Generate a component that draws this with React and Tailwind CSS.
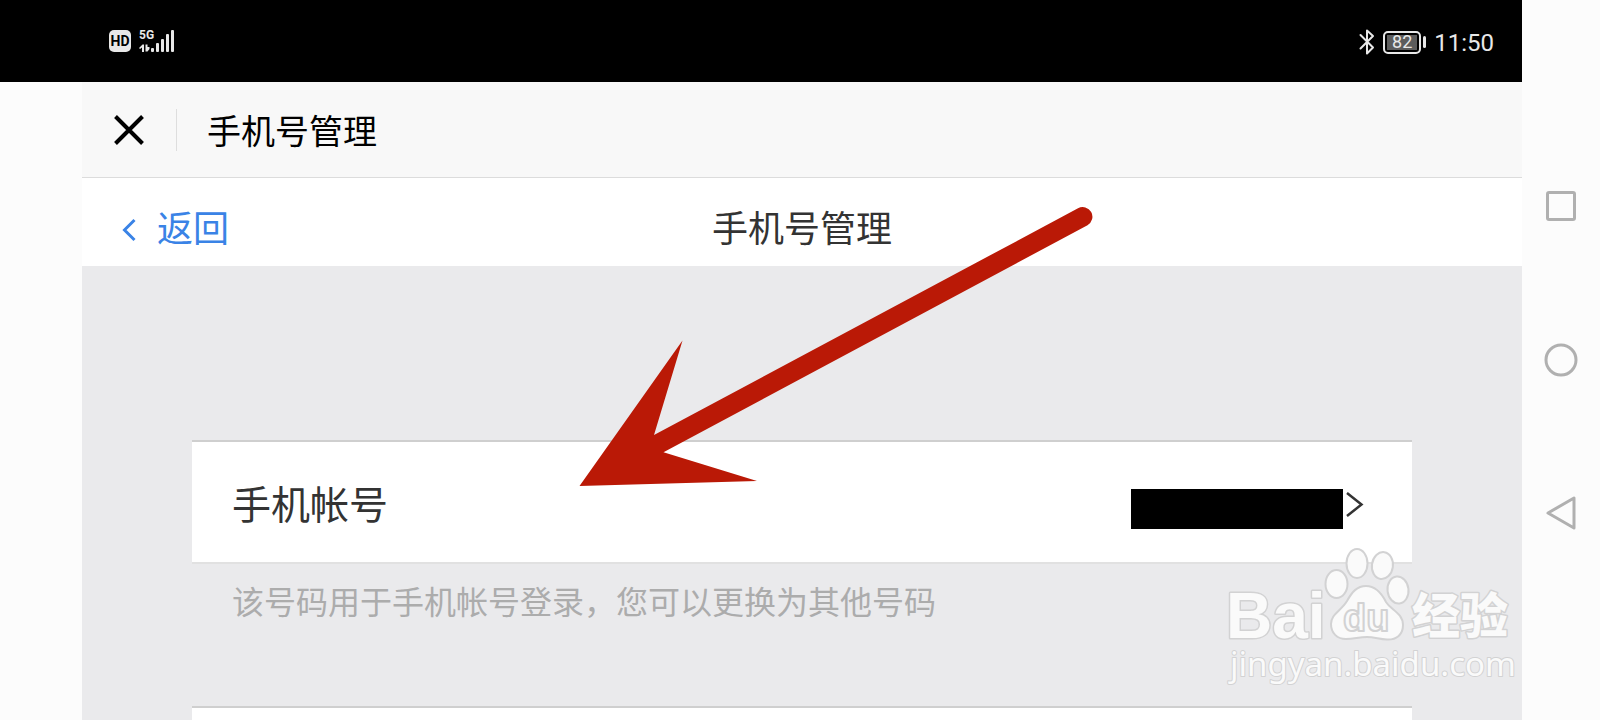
const SIGNAL_BARS = [
  { x: 12, height: 4 },
  { x: 17, height: 9 },
  { x: 22, height: 13 },
  { x: 27, height: 18 },
  { x: 32, height: 22 },
];

function SignalIcon() {
  return (
    <svg className="-mt-1" width="36" height="26" viewBox="0 -4 36 26" fill="#e8e8e8" aria-label="5G">
      <text x="0" y="9" className="font-['Roboto',sans-serif] text-[12px] font-bold">5G</text>
      {/* flechas de subida y bajada */}
      <path d="M0 18 L3.5 14.5 H5 V22 H3 V17.5 L1 19 Z M6.5 14.5 H8.5 V17 L10.5 17 L10.5 19 L8.5 21.5 H6.5 Z" />
      {SIGNAL_BARS.map((bar) => (
        <rect key={bar.x} x={bar.x} y={22 - bar.height} width="3" height={bar.height} rx="1" />
      ))}
    </svg>
  );
}

function BluetoothIcon() {
  return (
    <svg width="16" height="26" viewBox="0 0 16 26" fill="none" stroke="#e8e8e8" strokeWidth="2" strokeLinejoin="round" strokeLinecap="round">
      <path d="M1.5 6 L14 18.5 L8 24.5 V1.5 L14 7 L1.5 19.5" />
    </svg>
  );
}

function StatusBar() {
  return (
    <header className="flex h-[82px] items-center justify-between bg-black pr-7 pl-[109px] text-[#e8e8e8]">
      <div className="flex items-center gap-2">
        <span className="flex h-[22px] w-[22px] items-center justify-center rounded-[5px] bg-[#e8e8e8] font-['Roboto',sans-serif] text-[14px] font-bold text-black">
          HD
        </span>
        <SignalIcon />
      </div>
      <div className="flex items-center pt-0.5 font-['Roboto',sans-serif]">
        <BluetoothIcon />
        <span className="ml-2 flex h-[23px] w-[38px] items-center justify-center rounded-[5px] border-2 border-[#e8e8e8] p-[2px]">
          <span className="flex h-full w-full items-center justify-center bg-[#5c5c5c] text-[18px] leading-none">82</span>
        </span>
        <span className="ml-[2px] h-3 w-[3px] rounded-sm bg-[#e8e8e8]" />
        <time className="ml-2 pt-0.5 text-[24px] leading-8">11:50</time>
      </div>
    </header>
  );
}

function TitleBar() {
  return (
    <div className="flex h-24 items-center border-b border-[#dcdcdc] bg-[#f8f8f8] pl-8 text-black">
      <button type="button" aria-label="关闭">
        <svg width="30" height="30" viewBox="0 0 30 30" fill="none" stroke="currentColor" strokeWidth="4">
          <path d="M1.5 1.5 L28.5 28.5 M28.5 1.5 L1.5 28.5" />
        </svg>
      </button>
      <span className="ml-8 h-[42px] w-px bg-[#dedede]" />
      <h1 className="ml-[30px] text-[34px] leading-10">手机号管理</h1>
    </div>
  );
}

function NavBar() {
  return (
    <div className="grid h-[88px] grid-cols-[1fr_auto_1fr] items-center bg-white pt-2">
      <button type="button" className="flex items-center gap-5 justify-self-start pl-10 text-[#3a83e6]">
        <svg className="mt-2" width="15" height="24" viewBox="0 0 15 24" fill="none" stroke="currentColor" strokeWidth="3">
          <path d="M12.5 2 L2.5 12 L12.5 22" />
        </svg>
        <span className="text-[36px] leading-10">返回</span>
      </button>
      <h2 className="text-[36px] leading-10 text-[#333]">手机号管理</h2>
    </div>
  );
}

function PointerArrow() {
  return (
    <svg className="pointer-events-none absolute top-[200px] left-[570px]" width="540" height="300" viewBox="570 200 540 300" fill="#ba1906" aria-hidden="true">
      <path d="M579.5 486 L682.5 340.5 L654 435 L1078 208.3 A9.6 9.6 0 0 1 1087.5 225.2 L663.5 452.3 L757 481 Z" />
    </svg>
  );
}

function Watermark() {
  return (
    <svg
      className="pointer-events-none absolute right-1 bottom-[30px]"
      width="294"
      height="145"
      viewBox="1224 545 294 145"
      fill="#fafafa"
      stroke="#d2d2d3"
      strokeWidth="2"
      strokeLinejoin="round"
      aria-hidden="true"
    >
      <ellipse cx="1336.5" cy="584" rx="11" ry="14" />
      <ellipse cx="1357" cy="563.5" rx="10.5" ry="14.5" />
      <ellipse cx="1382.5" cy="565.5" rx="10.5" ry="13.5" transform="rotate(8 1382 565)" />
      <ellipse cx="1398" cy="590" rx="10.5" ry="13.5" transform="rotate(-6 1398 590)" />
      <path d="M1366 586 C1375 586 1381 592 1386 602 C1391 610 1403 613 1403 625 C1403 635 1396 640 1387 639.5 C1379 639 1374 637 1367 637 C1359 637 1354 639 1346 639 C1337 639 1331 633 1331 624 C1331 614 1341 611 1347 601 C1352 592 1357 586 1366 586 Z" />
      <g className="[paint-order:stroke]">
        <text x="1226" y="638" strokeWidth="3" className="font-['Liberation_Sans',Arial,sans-serif] text-[64px] font-bold">Bai</text>
        <text x="1412" y="633" strokeWidth="3" className="font-['Noto_Sans_CJK_SC',sans-serif] text-[48px] font-black">经验</text>
        <text x="1230" y="676" strokeWidth="2" className="font-['Noto_Sans',sans-serif] text-[33px]">jingyan.baidu.com</text>
      </g>
      <text x="1343" y="631" className="font-['Liberation_Sans',Arial,sans-serif] text-[38px] font-bold">du</text>
    </svg>
  );
}

function SystemNav() {
  return (
    <nav className="flex w-[78px] flex-col items-center justify-between bg-[#fcfcfc] py-[188px] text-[#b0b0b0]">
      <button type="button" aria-label="最近任务">
        <svg width="36" height="36" viewBox="0 0 36 36" fill="none" stroke="currentColor" strokeWidth="3">
          <rect x="4.5" y="4.5" width="27" height="27" rx="1.5" />
        </svg>
      </button>
      <button type="button" aria-label="主屏幕">
        <svg width="36" height="36" viewBox="0 0 36 36" fill="none" stroke="currentColor" strokeWidth="3">
          <circle cx="18" cy="18" r="15" />
        </svg>
      </button>
      <button type="button" aria-label="返回上一页">
        <svg width="36" height="36" viewBox="0 0 36 36" fill="none" stroke="currentColor" strokeWidth="3" strokeLinejoin="round">
          <path d="M31 2 V32 L5 17 Z" />
        </svg>
      </button>
    </nav>
  );
}

function App() {
  return (
    <div className="flex min-h-screen bg-[#fcfcfc] font-['Noto_Sans_CJK_SC',sans-serif]">
      <div className="relative flex flex-1 flex-col">
        <StatusBar />
        <main className="ml-[82px] flex flex-1 flex-col bg-[#eaeaec]">
          <TitleBar />
          <NavBar />
          <div className="flex flex-1 flex-col px-[110px] pt-[174px]">
            <button type="button" className="flex h-[124px] items-center border-t-2 border-b-2 border-t-[#cfcfcf] border-b-[#e1e1e1] bg-white pr-12 pl-10 text-left text-[#333]">
              <span className="flex-1 text-[39px] leading-[48px]">手机帐号</span>
              {/* número oculto */}
              <span className="mt-[14px] h-10 w-[212px] bg-black" />
              <svg className="mt-1 ml-[3px]" width="18" height="26" viewBox="0 0 18 26" fill="none" stroke="currentColor" strokeWidth="2.5">
                <path d="M1 2 L15.5 13.5 L1 25" />
              </svg>
            </button>
            <p className="px-10 pt-3 text-[32px] leading-[48px] text-[#acacac]">
              该号码用于手机帐号登录，您可以更换为其他号码
            </p>
            <div className="mt-[82px] flex-1 border-t-2 border-[#cfcfcf] bg-white" />
          </div>
        </main>
        <PointerArrow />
        <Watermark />
      </div>
      <SystemNav />
    </div>
  );
}

export default App;
